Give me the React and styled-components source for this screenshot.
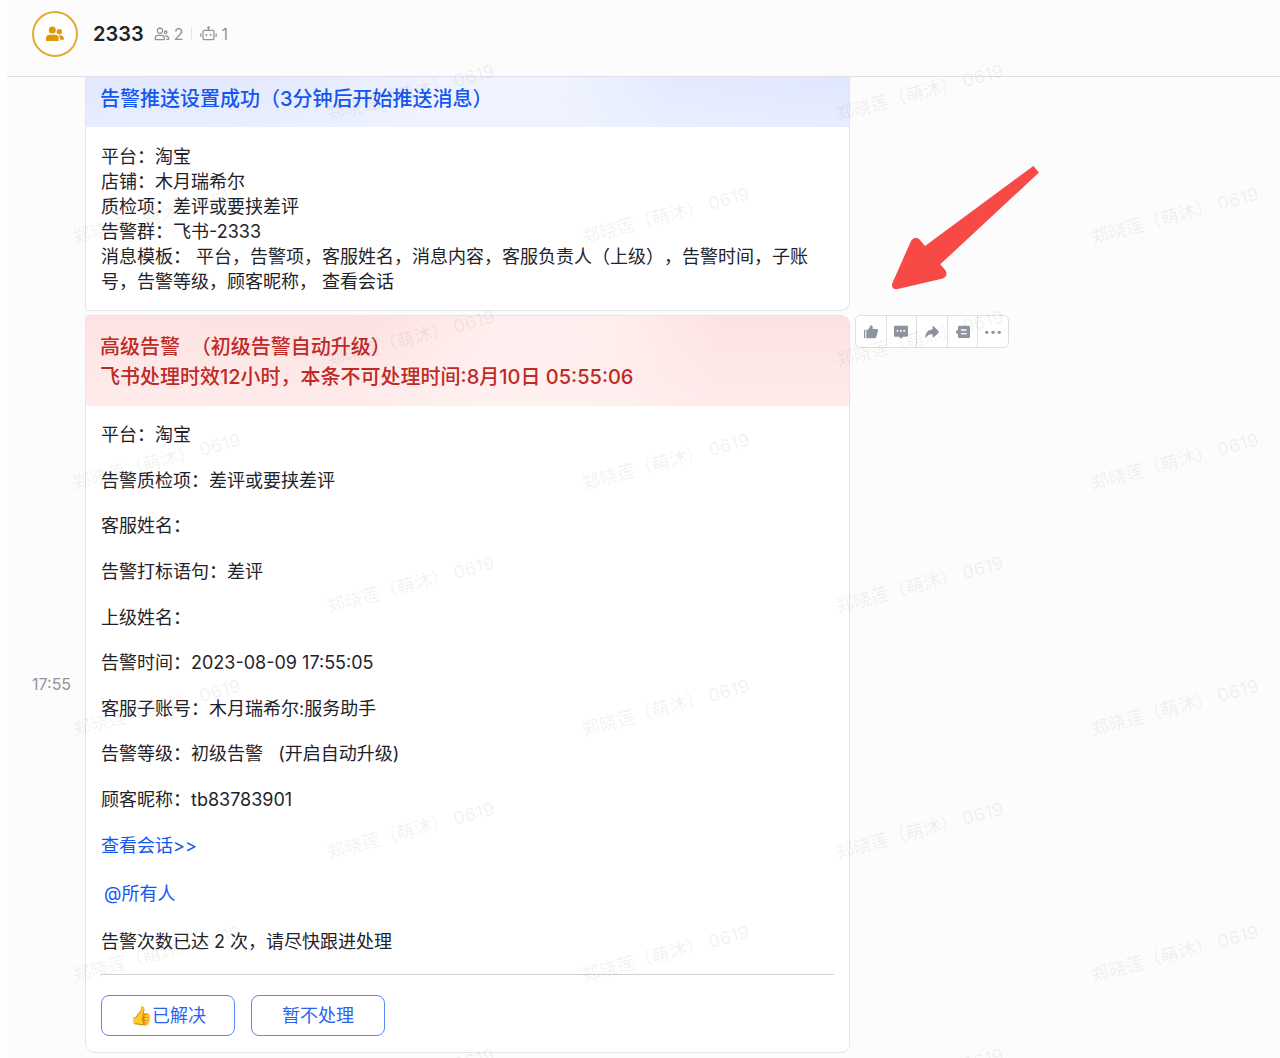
import styled, { createGlobalStyle, css } from "styled-components";

const WATERMARK = "郑晓莲（萌沐） 0619";
const WATERMARK_ROWS = Array.from({ length: 9 }, (_, i) => i);

const fields = [
    "平台：淘宝",
    "告警质检项：差评或要挟差评",
    "客服姓名：",
    "告警打标语句：差评",
    "上级姓名：",
    "告警时间：2023-08-09 17:55:05",
    "客服子账号：木月瑞希尔:服务助手",
    "告警等级：初级告警   (开启自动升级)",
    "顾客昵称：tb83783901",
];

const settings = [
    "平台：淘宝",
    "店铺：木月瑞希尔",
    "质检项：差评或要挟差评",
    "告警群：飞书-2333",
    "消息模板： 平台，告警项，客服姓名，消息内容，客服负责人（上级），告警时间，子账号，告警等级，顾客昵称， 查看会话",
];

const tools = [
    { label: "点赞", icon: <ThumbIcon /> },
    { label: "回复", icon: <CommentIcon /> },
    { label: "转发", icon: <ForwardIcon /> },
    { label: "话题", icon: <TopicIcon /> },
    { label: "更多", icon: <MoreIcon /> },
];

export default function App() {
    return (
        <Page>
            <GlobalStyle />
            <Header>
                <Avatar>
                    <GroupIcon />
                </Avatar>
                <Title>2333</Title>
                <Count>
                    <MembersIcon />
                    2
                </Count>
                <Divider />
                <Count>
                    <BotIcon />
                    1
                </Count>
            </Header>

            <Messages>
                <Message>
                    <Time />
                    <Card $first>
                        <CardHead $color="blue">
                            <h2>告警推送设置成功（3分钟后开始推送消息）</h2>
                        </CardHead>
                        <CardBody $first>
                            {settings.map((s) => <p key={s}>{s}</p>)}
                        </CardBody>
                    </Card>
                </Message>

                <Message>
                    <Time>17:55</Time>
                    <Card>
                        <CardHead $color="red">
                            <h2>高级告警  （初级告警自动升级）</h2>
                            <h2>飞书处理时效12小时，本条不可处理时间:8月10日 05:55:06</h2>
                        </CardHead>
                        <CardBody>
                            <Fields>
                                {fields.map((f) => <p key={f}>{f}</p>)}
                            </Fields>
                            <Extra>
                                <a href="#chat">查看会话&gt;&gt;</a>
                                <Mention href="#all">@所有人</Mention>
                                <p>告警次数已达 2 次，请尽快跟进处理</p>
                            </Extra>
                            <Line />
                            <Actions>
                                <Action type="button">👍已解决</Action>
                                <Action type="button">暂不处理</Action>
                            </Actions>
                        </CardBody>
                    </Card>
                    <Toolbar>
                        {tools.map((t) => (
                            <Tool key={t.label} type="button" aria-label={t.label}>{t.icon}</Tool>
                        ))}
                    </Toolbar>
                </Message>
            </Messages>

            <Arrow viewBox="0 0 152 128" aria-hidden="true">
                <path d="M143.3 2 L149 8.5 L50.3 100.3 L55.6 106.6 Q58.6 112.6 51.8 114.7 L6.7 125.3 Q1 125 2.2 119.5 L21 77 Q24.6 71.2 29.6 75.4 L35 82 Z" />
            </Arrow>

            <Watermarks aria-hidden="true">
                {WATERMARK_ROWS.map((r) => (
                    <WatermarkRow key={r} $odd={r % 2 === 1}>
                        <div><span>{WATERMARK}</span></div>
                        <div><span>{WATERMARK}</span></div>
                        {r % 2 === 1 && <div><span>{WATERMARK}</span></div>}
                    </WatermarkRow>
                ))}
            </Watermarks>
        </Page>
    )
}

function GroupIcon() {
    return (
        <svg width="20" height="16" viewBox="0 0 60 48" fill="#dc9b04">
            <circle cx="22" cy="12" r="10.5" />
            <path d="M3 44 V37 Q3 26 14 26 H30 Q41 26 41 37 V44 Q41 45 40 45 H4 Q3 45 3 44Z" />
            <circle cx="43" cy="17" r="8" />
            <path d="M40 28 H46 Q57 29 57 41 H45 V37 Q45 32 40 28Z" />
        </svg>
    )
}

function MembersIcon() {
    return (
        <svg width="16" height="16" viewBox="0 0 48 48" fill="none" stroke="#8f959e" strokeWidth="3.8">
            <circle cx="18" cy="14" r="8" />
            <path d="M4 41 V36 Q4 28 12 28 H23 Q31 28 31 36 V41 Z" strokeLinejoin="round" />
            <circle cx="35" cy="19" r="4" />
            <path d="M35 29 Q44 30 44 40 H38" strokeLinecap="round" strokeLinejoin="round" />
        </svg>
    )
}

function BotIcon() {
    return (
        <svg width="17" height="16" viewBox="0 0 51 48" fill="none" stroke="#8f959e" strokeWidth="3.8">
            <rect x="9" y="13" width="33" height="28" rx="4" />
            <path d="M25.5 13 V7 M2.5 24 V31 M48.5 24 V31" strokeLinecap="round" />
            <circle cx="25.5" cy="5" r="4" fill="#8f959e" stroke="none" />
            <circle cx="19" cy="27" r="3" fill="#8f959e" stroke="none" />
            <circle cx="32" cy="27" r="3" fill="#8f959e" stroke="none" />
        </svg>
    )
}

function ThumbIcon() {
    return (
        <svg width="16" height="16" viewBox="0 0 48 48">
            <path d="M3 19 Q3 17 5 17 H7 V43 H5 Q3 43 3 41Z" />
            <path d="M10 17 H14 Q20 15 21 7 Q22 3 26 4 Q31 6 29 15 H41 Q46 15 45 20 L40 39 Q39 43 35 43 H10Z" />
        </svg>
    )
}

function CommentIcon() {
    return (
        <svg width="16" height="16" viewBox="0 0 48 48">
            <path d="M6 5 H42 Q45 5 45 8 V35 Q45 38 42 38 H30 L24 44 L18 38 H6 Q3 38 3 35 V8 Q3 5 6 5Z" />
            <g fill="#fff">
                <rect x="11" y="18" width="5" height="5" />
                <rect x="21" y="18" width="5" height="5" />
                <rect x="31" y="18" width="5" height="5" />
            </g>
        </svg>
    )
}

function ForwardIcon() {
    return (
        <svg width="16" height="16" viewBox="0 0 48 48">
            <path d="M26 8 Q26 5 29 7 L44 22 Q46 24 44 26 L29 40 Q26 42 26 39 V31 Q13 30 6 41 Q4 43 4 40 Q5 18 26 16Z" />
        </svg>
    )
}

function TopicIcon() {
    return (
        <svg width="16" height="16" viewBox="0 0 48 48">
            <path d="M13 5 H41 Q45 5 45 9 V38 Q45 42 41 42 H13 Q9 42 9 38 V31 L3 26 Q2 24 3 22 L9 17 V9 Q9 5 13 5Z" />
            <path d="M18 18 H35 M18 29 H35" stroke="#fff" strokeWidth="4" />
        </svg>
    )
}

function MoreIcon() {
    return (
        <svg width="16" height="16" viewBox="0 0 48 48">
            <circle cx="5" cy="25" r="5" />
            <circle cx="24" cy="25" r="5" />
            <circle cx="43" cy="25" r="5" />
        </svg>
    )
}

const GlobalStyle = createGlobalStyle`
    * {
        box-sizing: border-box;
    }
    body {
        margin: 0;
        background: #fff;
    }
    h1, h2, p {
        margin: 0;
    }
    body, button {
        font-family: Inter, "Noto Sans CJK SC", sans-serif;
        text-spacing-trim: space-all;
    }
`

const Page = styled.div`
    position: relative;
    min-height: 100vh;
    overflow: hidden;
    border-left: 7px solid #fff;
    background: #fcfcfc;
    color: #1f2329;
`

const Header = styled.header`
    display: flex;
    align-items: center;
    height: 77px;
    padding: 0 25px 9px;
    border-bottom: 1px solid #dee0e3;
`

const Avatar = styled.div`
    display: flex;
    align-items: center;
    justify-content: center;
    width: 46px;
    height: 46px;
    margin-right: 15px;
    border: 2px solid #e2ab35;
    border-radius: 50%;
    background: #fff;
`

const Title = styled.h1`
    margin-right: 10px;
    font-size: 20px;
    font-weight: 600;
    line-height: 28px;
`

const Count = styled.span`
    display: flex;
    align-items: center;
    gap: 4px;
    font-size: 16px;
    line-height: 20px;
    color: #8f959e;
`

const Divider = styled.span`
    width: 1px;
    height: 14px;
    margin: 0 8px;
    background: #e5e6e8;
`

const Messages = styled.main`
    display: flex;
    flex-direction: column;
    gap: 4px;
    padding-bottom: 6px;
`

const Message = styled.section`
    display: flex;
    align-items: center;
`

const Time = styled.div`
    flex: none;
    width: 78px;
    padding-left: 25px;
    font-size: 16px;
    line-height: 20px;
    color: #8f959e;
`

const Card = styled.article`
    flex: 0 1 765px;
    overflow: hidden;
    border: 1px solid #e2e4e7;
    border-radius: 3px 9px 9px 10px;
    background: #fff;

    ${({ $first }) => $first && css`
        border-top: none;
        border-radius: 0 0 9px 3px;
    `}
`

const heads = {
    blue: css`
        padding: 7px 14px 13px;
        color: #1456f0;
        background:
            linear-gradient(to bottom, rgba(240, 244, 255, 0), rgba(240, 244, 255, 0.5)),
            linear-gradient(105deg, #e1e8fe 0%, #e5eafe 28%, #eff3ff 45%, #eff3ff 62%, #e4eafe 76%, #dfe7fe 100%);
    `,
    red: css`
        padding: 16px 14px 14px;
        color: #c02a26;
        background:
            linear-gradient(to bottom, rgba(255, 242, 242, 0), rgba(255, 242, 242, 0.6)),
            linear-gradient(105deg, #fee3e3 0%, #fde1e1 36%, #ffeeed 52%, #ffefed 66%, #fde2e2 82%, #fde2e2 100%);
    `,
}

const CardHead = styled.header`
    ${({ $color }) => heads[$color]}

    h2 {
        font-size: 20px;
        font-weight: 500;
        line-height: 30px;
        white-space: pre-wrap;
    }
`

const CardBody = styled.div`
    padding: ${({ $first }) => ($first ? "17px 15px 16px" : "16px 15px")};
    font-size: 18px;
    line-height: 25px;

    p {
        white-space: pre-wrap;
    }
    a {
        color: #1456f0;
        text-decoration: none;
    }
`

const Fields = styled.div`
    display: flex;
    flex-direction: column;
    justify-content: space-between;
    min-height: 390px;
`

const Extra = styled.div`
    display: flex;
    flex-direction: column;
    align-items: flex-start;
    gap: 23px;
    margin-top: 21px;
`

const Mention = styled.a`
    padding: 0 3px;
`

const Line = styled.hr`
    height: 1px;
    margin: 20px 0;
    border: none;
    background: #d0d3d6;
`

const Actions = styled.div`
    display: flex;
    gap: 16px;
`

const Action = styled.button`
    width: 134px;
    height: 41px;
    padding: 0;
    border: 1px solid #5b88f7;
    border-radius: 8px;
    background: #fff;
    color: #2b63f0;
    font-size: 18px;
    line-height: 25px;
`

const Toolbar = styled.div`
    display: flex;
    flex: none;
    align-self: flex-start;
    width: 154px;
    height: 33px;
    margin-left: 5px;
    border: 1px solid #dee0e3;
    border-radius: 5px;
    background: #fff;
    overflow: hidden;
`

const Tool = styled.button`
    display: flex;
    flex: 1;
    align-items: center;
    justify-content: center;
    padding: 0;
    border: none;
    background: none;

    & + & {
        border-left: 1px solid #dee0e3;
    }
    svg {
        fill: #8f959e;
    }
`

const Arrow = styled.svg`
    position: absolute;
    top: 164px;
    left: 883px;
    width: 152px;
    height: 128px;
    fill: #f74a47;
`

const Watermarks = styled.div`
    position: absolute;
    inset: 0;
    padding-top: 29px;
    overflow: hidden;
    pointer-events: none;
    font-size: 18px;
    font-weight: 500;
    color: rgba(31, 35, 41, 0.06);
`

const WatermarkRow = styled.div`
    display: flex;
    align-items: center;
    height: 123px;
    padding-left: ${({ $odd }) => ($odd ? "63px" : "317px")};

    div {
        flex: none;
        width: 509px;
    }
    span {
        display: inline-block;
        white-space: nowrap;
        transform: rotate(-15deg);
    }
`
